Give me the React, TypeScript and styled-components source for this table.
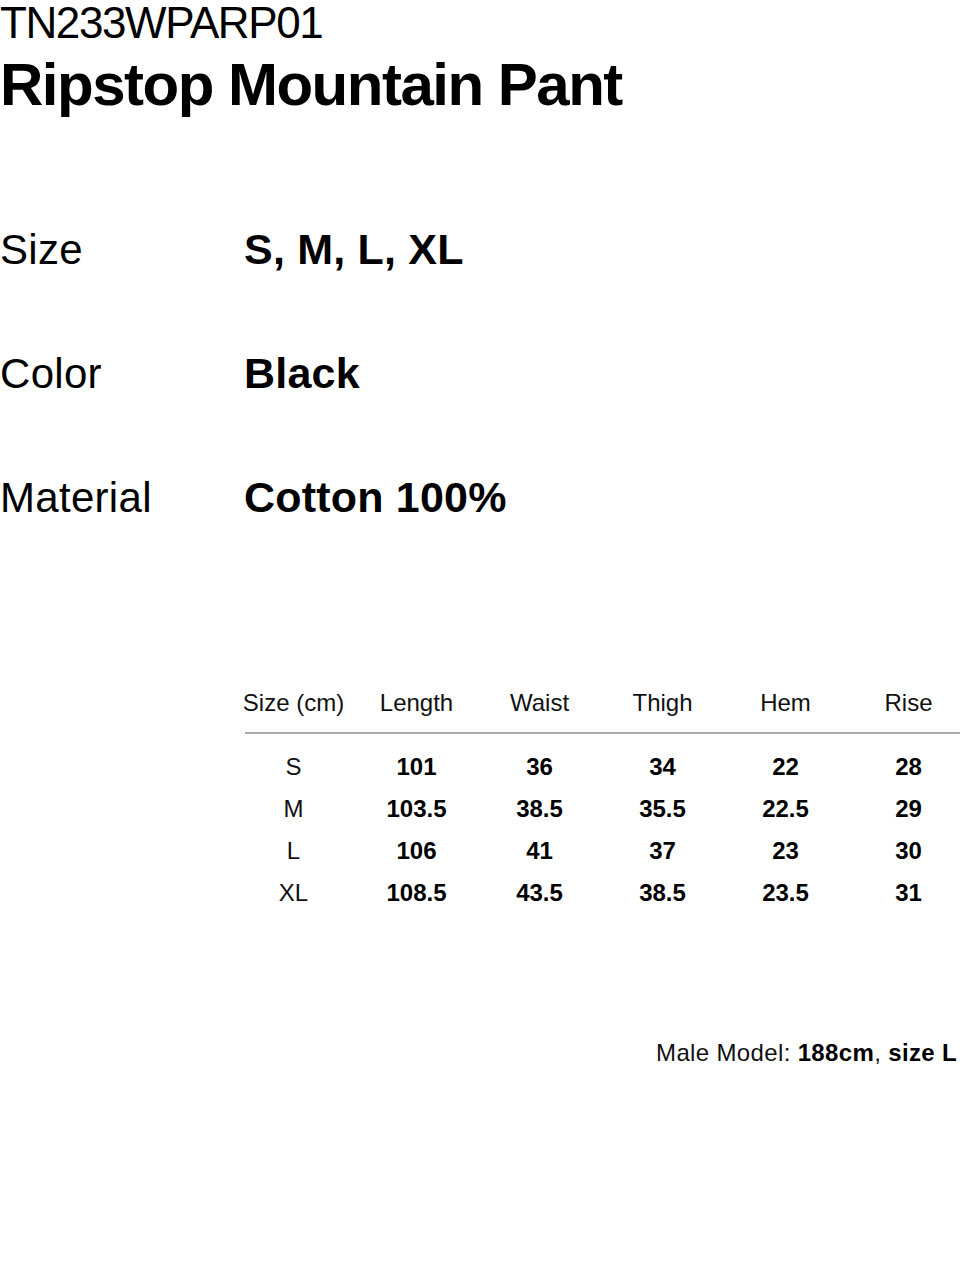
import { FC } from "react";
import styled, { createGlobalStyle } from "styled-components";

const GlobalStyle = createGlobalStyle`
  html, body {
    margin: 0;
    padding: 0;
    background: #ffffff;
    overflow-x: hidden;
  }
  body {
    font-family: "Liberation Sans", Arial, Helvetica, sans-serif;
    color: #000000;
  }
`;

const Page = styled.div`
  width: 960px;
  height: 1281px;
  display: flex;
  flex-direction: column;
`;

const Code = styled.div`
  padding-top: 1px;
  font-size: 44px;
  line-height: 44px;
  letter-spacing: -1.4px;
  font-weight: 400;
  white-space: nowrap;
`;

const Title = styled.h1`
  margin: 10px 0 0;
  font-size: 60px;
  line-height: 60px;
  letter-spacing: -1.5px;
  font-weight: 700;
  white-space: nowrap;
`;

const Specs = styled.div`
  margin-top: 113px;
  display: flex;
  flex-direction: column;
  gap: 81px;
`;

const SpecRow = styled.div`
  display: grid;
  grid-template-columns: 244px 1fr;
  align-items: baseline;
  line-height: 42px;
`;

const SpecLabel = styled.span`
  font-size: 42px;
  letter-spacing: 0.3px;
  font-weight: 400;
`;

const SpecValue = styled.span`
  font-size: 43px;
  letter-spacing: 0.2px;
  font-weight: 700;
`;

const Table = styled.div`
  margin: 172px 0 0 232px;
  width: 738px;
`;

const Cells = styled.div<{ $header?: boolean }>`
  display: grid;
  grid-template-columns: repeat(6, 123px);
  font-size: 24px;
  line-height: ${({ $header }) => ($header ? "24px" : "42px")};
  text-align: center;
`;

const Cell = styled.span<{ $bold?: boolean }>`
  font-weight: ${({ $bold }) => ($bold ? 700 : 400)};
  color: ${({ $bold }) => ($bold ? "#000" : "#111")};
`;

const Divider = styled.div`
  margin: 17px 0 12px 13px;
  height: 2px;
  background: #a9a9a9;
`;

const Footer = styled.div`
  margin-top: 127px;
  align-self: flex-end;
  padding-right: 3px;
  font-size: 24px;
  line-height: 24px;
  letter-spacing: 0.35px;
  color: #111;
  b {
    color: #000;
    font-weight: 700;
  }
`;

const specs = [
  { label: "Size", value: "S, M, L, XL" },
  { label: "Color", value: "Black" },
  { label: "Material", value: "Cotton 100%" },
];

const headers = ["Size (cm)", "Length", "Waist", "Thigh", "Hem", "Rise"];

const rows = [
  ["S", "101", "36", "34", "22", "28"],
  ["M", "103.5", "38.5", "35.5", "22.5", "29"],
  ["L", "106", "41", "37", "23", "30"],
  ["XL", "108.5", "43.5", "38.5", "23.5", "31"],
];

const App: FC = () => (
  <>
    <GlobalStyle />
    <Page>
      <Code>TN233WPARP01</Code>
      <Title>Ripstop Mountain Pant</Title>

      <Specs>
        {specs.map((s) => (
          <SpecRow key={s.label}>
            <SpecLabel>{s.label}</SpecLabel>
            <SpecValue>{s.value}</SpecValue>
          </SpecRow>
        ))}
      </Specs>

      <Table>
        <Cells $header>
          {headers.map((h) => (
            <Cell key={h}>{h}</Cell>
          ))}
        </Cells>
        <Divider />
        {rows.map((r) => (
          <Cells key={r[0]}>
            {r.map((v, i) => (
              <Cell key={i} $bold={i > 0}>
                {v}
              </Cell>
            ))}
          </Cells>
        ))}
      </Table>

      <Footer>
        Male Model: <b>188cm</b>, <b>size L</b>
      </Footer>
    </Page>
  </>
);

export default App;
